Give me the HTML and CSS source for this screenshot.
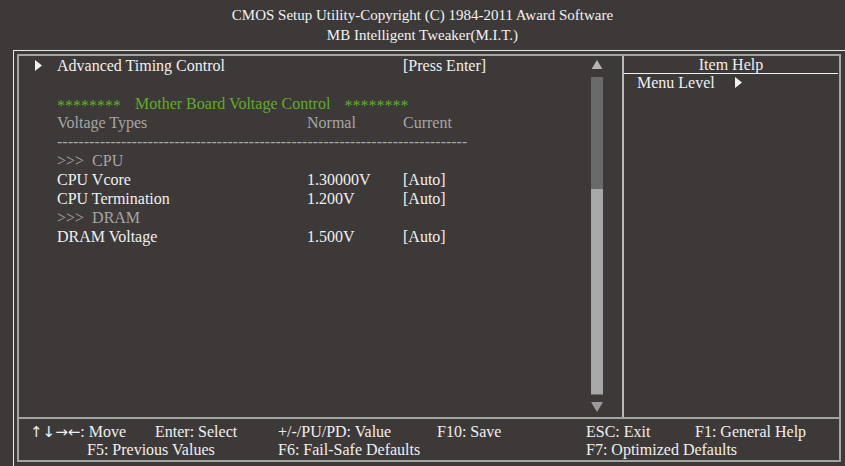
FILE: index.html
```html
<!DOCTYPE html>
<html>
<head>
	<title>MB Intelligent Tweaker(M.I.T.)</title>
	<link rel="stylesheet" href="styles.css">
</head>
<body>
<div class="header">
	<div>CMOS Setup Utility-Copyright (C) 1984-2011 Award Software</div>
	<div>MB Intelligent Tweaker(M.I.T.)</div>
</div>
<div class="frame">
	<div class="box">
		<div class="main">
			<div class="left">
				<div class="items">
					<div class="row">
						<span class="mark"><svg width="7" height="11" viewBox="0 0 7 11"><polygon points="0,0 7,5.5 0,11" fill="#f2f2f2"/></svg></span>
						<span>Advanced Timing Control</span>
						<span></span>
						<span>[Press Enter]</span>
					</div>
					<div class="row"><span></span></div>
					<div class="row green">
						<span></span>
						<span class="wide"><span class="stars">********</span><span class="gtitle">Mother Board Voltage Control</span><span class="stars">********</span></span>
					</div>
					<div class="row dim">
						<span></span>
						<span>Voltage Types</span>
						<span>Normal</span>
						<span>Current</span>
					</div>
					<div class="row dim">
						<span></span>
						<span class="wide dashes">-----------------------------------------------------------------------------</span>
					</div>
					<div class="row dim"><span></span><span>&gt;&gt;&gt;&nbsp; CPU</span></div>
					<div class="row">
						<span></span>
						<span>CPU Vcore</span>
						<span>1.30000V</span>
						<span>[Auto]</span>
					</div>
					<div class="row">
						<span></span>
						<span>CPU Termination</span>
						<span>1.200V</span>
						<span>[Auto]</span>
					</div>
					<div class="row dim"><span></span><span>&gt;&gt;&gt;&nbsp; DRAM</span></div>
					<div class="row">
						<span></span>
						<span>DRAM Voltage</span>
						<span>1.500V</span>
						<span>[Auto]</span>
					</div>
				</div>
				<div class="scroll">
					<svg class="arrow-up" width="12" height="10" viewBox="0 0 12 10"><polygon points="6,0 12,10 0,10" fill="#b3b3b3"/></svg>
					<div class="track">
						<div class="track-top"></div>
						<div class="thumb"></div>
					</div>
					<svg class="arrow-down" width="12" height="10" viewBox="0 0 12 10"><polygon points="0,0 12,0 6,10" fill="#9a9a9a"/></svg>
				</div>
			</div>
			<div class="help">
				<div class="help-title">Item Help</div>
				<div class="help-line">Menu Level <svg width="7" height="11" viewBox="0 0 7 11"><polygon points="0,0 7,5.5 0,11" fill="#f2f2f2"/></svg></div>
			</div>
		</div>
		<div class="footer">
			<span class="k-move"><span class="arrows">&#8593;&#8595;&#8594;&#8592;</span>: Move</span>
			<span class="k-enter">Enter: Select</span>
			<span class="k-value">+/-/PU/PD: Value</span>
			<span class="k-save">F10: Save</span>
			<span class="k-esc">ESC: Exit</span>
			<span class="k-f1">F1: General Help</span>
			<span class="k-f5">F5: Previous Values</span>
			<span class="k-f6">F6: Fail-Safe Defaults</span>
			<span class="k-f7">F7: Optimized Defaults</span>
		</div>
	</div>
</div>
</body>
</html>
```

FILE: styles.css
```css
html, body{
	margin: 0;
	padding: 0;
}
body{
	width: 845px;
	height: 466px;
	overflow: hidden;
	background: #3d3938;
	color: #f0f0f0;
	font-family: "Liberation Serif", "Times New Roman", serif;
	font-size: 16px;
}
/*标题*/
.header{
	height: 50px;
	box-sizing: border-box;
	padding-top: 5px;
	text-align: center;
	font-size: 15px;
	line-height: 20px;
	color: #f2f2f2;
}
/*外框*/
.frame{
	margin-left: 13px;
	border-left: 1px solid #e8e8e8;
	border-top: 1px solid #e8e8e8;
	padding: 3px 0 10px 3px;
}
.box{
	width: 824px;
	height: 408px;
	box-sizing: border-box;
	border: 2px solid #a4a4a4;
	display: flex;
	flex-direction: column;
}
.main{
	flex: 1;
	display: flex;
}
.left{
	width: 605px;
	box-sizing: border-box;
	border-right: 2px solid #b8b8b8;
	display: flex;
}
.items{
	width: 572px;
}
.row{
	display: grid;
	grid-template-columns: 16px 22px 250px 96px 1fr;
	height: 19px;
	line-height: 19px;
	white-space: nowrap;
}
.row > span:first-child{
	grid-column: 1 / 3;
}
.mark{
	display: flex;
	align-items: center;
}
.mark svg{
	margin-left: 16px;
}
.wide{
	grid-column: 3 / 6;
}
.dim{
	color: #a6a6a6;
}
.green{
	color: #62a92c;
}
.stars{
	position: relative;
	top: 2px;
}
.gtitle{
	margin: 0 14px;
}
.dashes{
	width: 410px;
	overflow: hidden;
}
/*滚动条*/
.scroll{
	width: 12px;
	display: flex;
	flex-direction: column;
	align-items: center;
}
.arrow-up{
	margin-top: 4px;
	height: 9px;
}
.track{
	margin-top: 8px;
	width: 12px;
}
.track-top{
	height: 112px;
	background: #6a6a6a;
}
.thumb{
	height: 205px;
	background: #a8a8a8;
	border-bottom: 1px solid #707070;
}
.arrow-down{
	margin-top: 7px;
}
/*帮助区域*/
.help{
	flex: 1;
}
.help-title{
	height: 17px;
	line-height: 17px;
	text-align: center;
	border-bottom: 1px solid #f0f0f0;
	margin-right: 1px;
}
.help-line{
	padding-left: 13px;
	line-height: 18px;
}
.help-line svg{
	margin-left: 16px;
}
/*底部按键说明*/
.footer{
	height: 43px;
	box-sizing: border-box;
	border-top: 2px solid #a4a4a4;
	padding: 4px 0 0 11px;
	display: grid;
	grid-template-columns: 57px 68px 123px 159px 149px 109px 1fr;
	grid-auto-rows: 18px;
	line-height: 18px;
	white-space: nowrap;
}
.arrows{
	font-family: "DejaVu Sans", sans-serif;
	font-size: 15px;
}
.k-move{ grid-column: 1 / 3; }
.k-enter{ grid-column: 3; }
.k-value{ grid-column: 4; }
.k-save{ grid-column: 5; }
.k-esc{ grid-column: 6; }
.k-f1{ grid-column: 7; }
.k-f5{ grid-column: 2 / 4; }
.k-f6{ grid-column: 4 / 6; }
.k-f7{ grid-column: 6 / 8; }
```
